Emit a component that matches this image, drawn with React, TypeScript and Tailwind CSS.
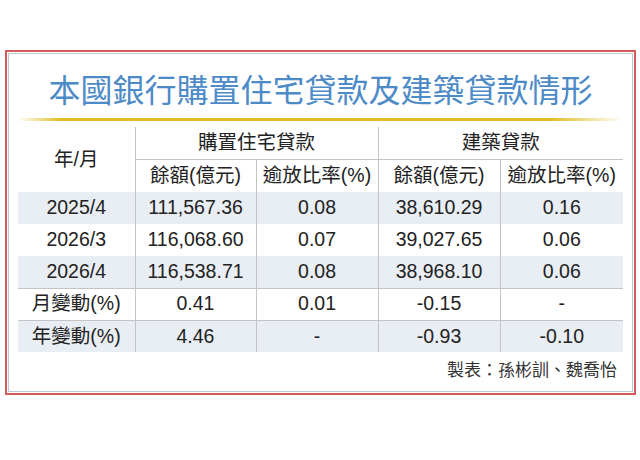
const rows = [
  { label: "2025/4", a: "111,567.36", b: "0.08", c: "38,610.29", d: "0.16", shade: true, line: false },
  { label: "2026/3", a: "116,068.60", b: "0.07", c: "39,027.65", d: "0.06", shade: false, line: false },
  { label: "2026/4", a: "116,538.71", b: "0.08", c: "38,968.10", d: "0.06", shade: true, line: false },
  { label: "月變動(%)", a: "0.41", b: "0.01", c: "-0.15", d: "-", shade: false, line: true },
  { label: "年變動(%)", a: "4.46", b: "-", c: "-0.93", d: "-0.10", shade: true, line: true },
];

export default function App() {
  return (
    <div className="h-[460px] w-[640px] bg-white pl-[5px] pt-[50px] font-['Liberation_Sans','Noto_Sans_CJK_TC',sans-serif] text-[#222]">
      <div className="h-[345px] w-[631px] border-2 border-[#d65a5a] p-px">
        <div className="flex h-full flex-col border border-[#b9cad8] px-[9px]">
          <h1 className="mt-[14px] text-center font-['Noto_Sans_CJK_TC',sans-serif] text-[32px] font-normal leading-[40px] text-[#4d8ac8]">
            本國銀行購置住宅貸款及建築貸款情形
          </h1>

          <div className="mt-[10px] h-[3px] bg-[linear-gradient(to_right,rgba(226,190,34,0)_0%,#e0bd24_7%,#e0bd24_88%,rgba(226,190,34,0)_100%)]" />

          <table className="mt-[6px] w-[605px] table-fixed border-collapse text-center text-[19.5px] leading-none">
            <colgroup>
              <col className="w-[117px]" />
              <col className="w-[121px]" />
              <col className="w-[122px]" />
              <col className="w-[122px]" />
              <col className="w-[123px]" />
            </colgroup>
            <thead>
              <tr className="h-[32px]">
                <th rowSpan={2} className="border-r border-[#c4c4c4] font-normal">
                  年/月
                </th>
                <th colSpan={2} className="border-b border-r border-[#c4c4c4] font-normal">
                  購置住宅貸款
                </th>
                <th colSpan={2} className="border-b border-[#c4c4c4] font-normal">
                  建築貸款
                </th>
              </tr>
              <tr className="h-[33px]">
                <th className="border-r border-[#c4c4c4] font-normal">餘額(億元)</th>
                <th className="border-r border-[#c4c4c4] font-normal">逾放比率(%)</th>
                <th className="border-r border-[#c4c4c4] font-normal">餘額(億元)</th>
                <th className="font-normal">逾放比率(%)</th>
              </tr>
            </thead>
            <tbody>
              {rows.map((row) => (
                <tr
                  key={row.label}
                  className={`h-[32px] ${row.shade ? "bg-[#e9edf4]" : "bg-white"} ${row.line ? "border-t border-[#c4c4c4]" : ""}`}
                >
                  <td className="border-r border-[#c4c4c4]">{row.label}</td>
                  <td className="border-r border-[#c4c4c4]">{row.a}</td>
                  <td className="border-r border-[#c4c4c4]">{row.b}</td>
                  <td className="border-r border-[#c4c4c4]">{row.c}</td>
                  <td>{row.d}</td>
                </tr>
              ))}
            </tbody>
          </table>

          <p className="mt-[7px] pr-[6px] text-right font-['Noto_Sans_CJK_TC',sans-serif] text-[17px] leading-[20px] text-[#333]">
            製表：孫彬訓、魏喬怡
          </p>
        </div>
      </div>
    </div>
  );
}
